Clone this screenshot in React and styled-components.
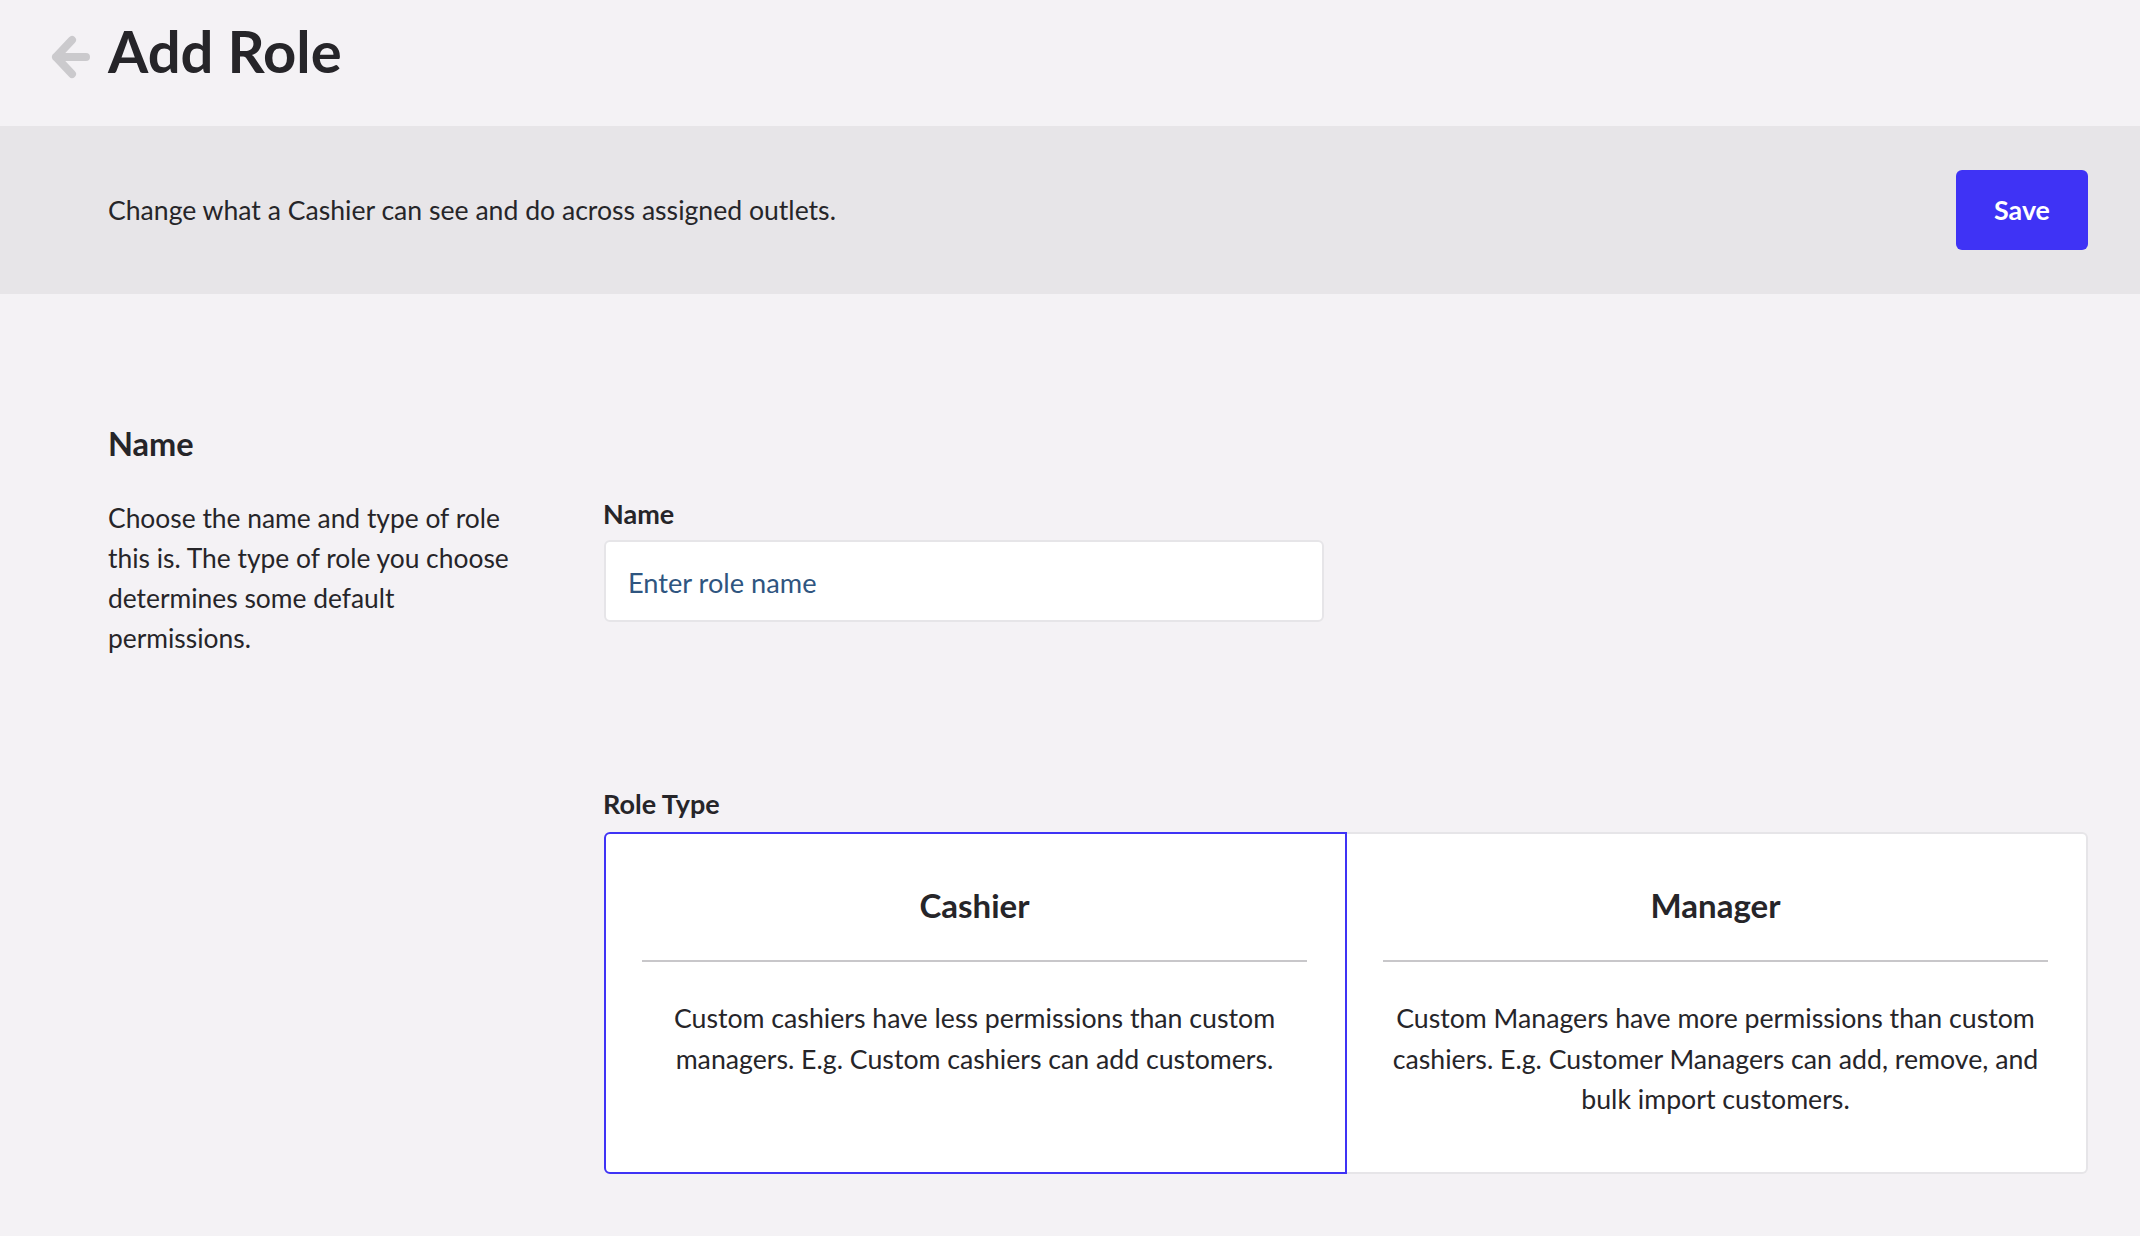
import React from "react";
import styled, { createGlobalStyle } from "styled-components";

const Global = createGlobalStyle`
  html, body { margin: 0; padding: 0; background: #f4f2f5; }
  body { font-family: Lato, "Liberation Sans", sans-serif; color: #262529; }
  * { box-sizing: border-box; }
`;

const Page = styled.div`
  width: 2140px;
  height: 1236px;
  overflow: hidden;
  background: #f4f2f5;
`;
const Header = styled.header`
  height: 126px;
  padding-left: 50px;
  display: flex;
  align-items: flex-start;
`;
const BackIcon = styled.svg`
  width: 40px;
  height: 50px;
  margin-top: 32px;
  margin-right: 18px;
  flex: none;
`;
const Title = styled.h1`
  margin: 11px 0 0;
  font-size: 58px;
  line-height: 80px;
  font-weight: 700;
`;
const Banner = styled.div`
  height: 168px;
  background: #e7e5e8;
  padding: 0 52px 0 108px;
  display: flex;
  align-items: center;
  justify-content: space-between;
`;
const BannerText = styled.p`
  margin: 0;
  font-size: 26.6px;
  line-height: 40px;
`;
const SaveButton = styled.button`
  width: 132px;
  height: 80px;
  border: none;
  border-radius: 6px;
  background: #3f33f5;
  color: #fff;
  font-family: inherit;
  font-size: 26.8px;
  font-weight: 700;
`;
const Section = styled.section`
  display: flex;
  padding: 127px 52px 0 108px;
`;
const Aside = styled.div`
  width: 496px;
  flex: none;
`;
const SectionTitle = styled.h2`
  margin: 0 0 31px;
  font-size: 32.5px;
  line-height: 46px;
  font-weight: 700;
`;
const Description = styled.p`
  margin: 0;
  width: 410px;
  font-size: 26.4px;
  line-height: 40px;
`;
const Form = styled.div`
  flex: 1;
  padding-top: 73px;
  min-width: 0;
`;
const FieldLabel = styled.label`
  display: block;
  margin-left: -1px;
  font-size: 27px;
  line-height: 40px;
  font-weight: 700;
  margin-bottom: ${(p) => p.$gap}px;
`;
const TextInput = styled.div`
  width: 720px;
  height: 82px;
  background: #fff;
  border: 2px solid #e6e5e8;
  border-radius: 6px;
  padding: 2px 22px 0;
  display: flex;
  align-items: center;
  font-size: 27.2px;
  color: #2f5580;
`;
const RoleField = styled.div`
  margin-top: 162px;
`;
const RoleCards = styled.div`
  display: flex;
  height: 342px;
`;
const RoleCard = styled.div`
  flex: 1;
  background: #fff;
  border: 2px solid ${(p) => (p.$selected ? "#3f33f5" : "#e6e5e8")};
  border-left-width: ${(p) => (p.$selected ? "2px" : "0")};
  border-radius: ${(p) => (p.$selected ? "6px 0 0 6px" : "0 6px 6px 0")};
  padding: 0 38px 0 36px;
  text-align: center;
`;
const RoleName = styled.div`
  height: 128px;
  padding-top: 16px;
  border-bottom: 2px solid #c8c7ca;
  display: flex;
  align-items: center;
  justify-content: center;
  font-size: 33px;
  font-weight: 700;
`;
const RoleText = styled.p`
  margin: 36px -6px 0;
  font-size: 26.7px;
  line-height: 40.5px;
`;

export default function App() {
  return (
    <Page>
      <Global />
      <Header>
        <BackIcon viewBox="0 0 40 50" aria-hidden="true">
          <path d="M36 25H6M22 8 6 25l16 17" fill="none" stroke="#cbcacd" strokeWidth="8" strokeLinecap="round" strokeLinejoin="round" />
        </BackIcon>
        <Title>Add Role</Title>
      </Header>
      <Banner>
        <BannerText>Change what a Cashier can see and do across assigned outlets.</BannerText>
        <SaveButton>Save</SaveButton>
      </Banner>
      <Section>
        <Aside>
          <SectionTitle>Name</SectionTitle>
          <Description>Choose the name and type of role this is. The type of role you choose determines some default permissions.</Description>
        </Aside>
        <Form>
          <FieldLabel $gap={6}>Name</FieldLabel>
          <TextInput>Enter role name</TextInput>
          <RoleField>
            <FieldLabel $gap={8}>Role Type</FieldLabel>
            <RoleCards>
              <RoleCard $selected>
                <RoleName>Cashier</RoleName>
                <RoleText>Custom cashiers have less permissions than custom managers. E.g. Custom cashiers can add customers.</RoleText>
              </RoleCard>
              <RoleCard>
                <RoleName>Manager</RoleName>
                <RoleText>Custom Managers have more permissions than custom cashiers. E.g. Customer Managers can add, remove, and bulk import customers.</RoleText>
              </RoleCard>
            </RoleCards>
          </RoleField>
        </Form>
      </Section>
    </Page>
  );
}
